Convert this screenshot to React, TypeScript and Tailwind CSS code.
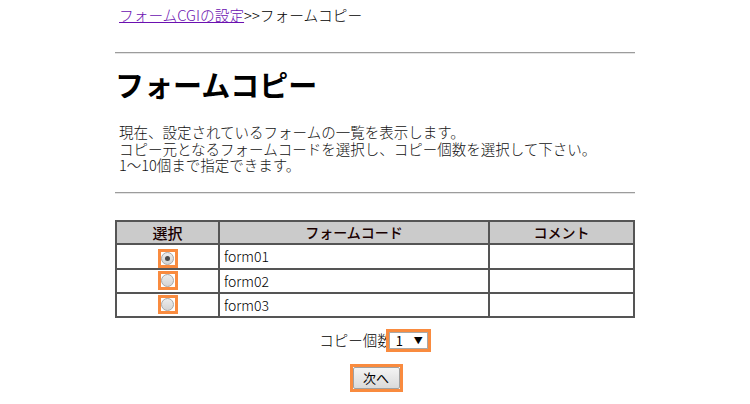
const font = { fontFamily: '"Noto Sans CJK JP", "Liberation Sans", sans-serif' };

const rows = ["form01", "form02", "form03"];

function Radio({ checked }: { checked: boolean }) {
  return (
    <span className="inline-flex items-center justify-center w-[20px] h-[19px] border-[3px] border-[#f98b3f] bg-white align-middle">
      <span className="w-[13px] h-[13px] rounded-full border border-[#a8a8a8] bg-gradient-to-b from-[#ececec] to-[#d4d4d4] flex items-center justify-center">
        {checked && <span className="w-[5px] h-[5px] rounded-full bg-[#4a4a4a]" />}
      </span>
    </span>
  );
}

function Rule() {
  return <div className="h-[2px] border-t border-[#9c9c9c] border-b border-b-[#e4e4e4]" />;
}

export default function App() {
  return (
    <div className="w-[750px] h-[404px] bg-white text-black overflow-hidden" style={font}>
      <div className="w-[520px] mx-auto">
        <div className="pt-[5px] pl-[4px] text-[14.7px] leading-[20px] font-light">
          <a href="#" className="text-[#6b10b0] underline">フォームCGIの設定</a>
          <span>&gt;&gt;フォームコピー</span>
        </div>

        <div className="mt-[27px]">
          <Rule />
        </div>

        <h1 className="mt-[13px] text-[29px] leading-[34px] font-bold">フォームコピー</h1>

        <p className="mt-[23px] pl-[4px] text-[14.5px] leading-[16.5px] font-light text-[#111]">
          現在、設定されているフォームの一覧を表示します。
          <br />
          コピー元となるフォームコードを選択し、コピー個数を選択して下さい。
          <br />
          1～10個まで指定できます。
        </p>

        <div className="mt-[18px]">
          <Rule />
        </div>

        <table className="mt-[26px] w-[520px] border-collapse border-2 border-[#555] text-[14px]">
          <thead>
            <tr className="bg-[#cbcbcb] h-[23px]">
              <th className="w-[103px] border-2 border-[#555] font-medium text-[15px] text-[#1a0000] p-0 leading-[19px]">選択</th>
              <th className="w-[270px] border-2 border-[#555] font-medium text-[#1a0000] p-0 leading-[19px]">フォームコード</th>
              <th className="border-2 border-[#555] font-medium text-[#1a0000] p-0 leading-[19px]">コメント</th>
            </tr>
          </thead>
          <tbody>
            {rows.map((r, i) => (
              <tr key={r} className="h-[24px]">
                <td className="border-2 border-[#555] text-center p-0">
                  <span className="inline-flex mt-[1px]"><Radio checked={i === 0} /></span>
                </td>
                <td className="border-2 border-[#555] px-[4px] py-0 leading-[18px] font-light">{r}</td>
                <td className="border-2 border-[#555] p-0"></td>
              </tr>
            ))}
          </tbody>
        </table>

        <div className="mt-[11px] flex justify-center items-center text-[14.5px] font-light">
          <span className="mr-[-6px]">コピー個数</span>
          <span className="relative inline-flex items-center border-[3px] border-[#f98b3f] bg-white">
            <span className="inline-flex items-center w-[39px] h-[17px] border border-[#a8a8a8] bg-white pl-[6px] pr-[4px] justify-between text-[13px] leading-none font-normal">
              <span>1</span>
              <span className="text-[9px]">▼</span>
            </span>
          </span>
        </div>

        <div className="mt-[12px] flex justify-center">
          <span className="inline-flex border-[3px] border-[#f98b3f] ml-[2px]">
            <button className="w-[47px] h-[22px] border border-[#a0a0a0] rounded-[2px] bg-gradient-to-b from-[#f4f4f4] to-[#dadada] text-[13px] leading-none text-black">
              次へ
            </button>
          </span>
        </div>
      </div>
    </div>
  );
}
